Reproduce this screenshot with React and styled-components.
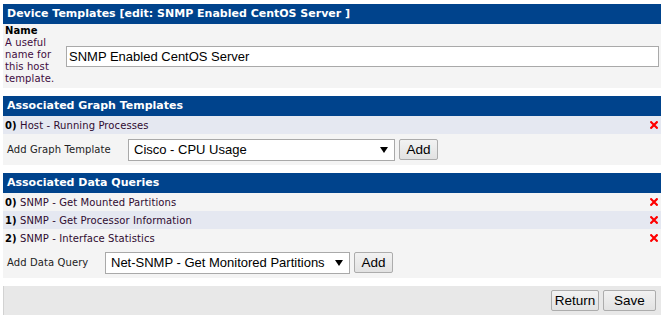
import React from "react";
import styled, { createGlobalStyle } from "styled-components";

const GlobalStyle = createGlobalStyle`
  body {
    margin: 0;
    background: #ffffff;
    font-family: "DejaVu Sans", Verdana, sans-serif;
  }
`;

const Page = styled.div`
  width: 658px;
  padding: 4px 3px 0 3px;
  display: flex;
  flex-direction: column;
  gap: 8px;
`;

const Panel = styled.section`
  display: flex;
  flex-direction: column;
`;

const TitleBar = styled.div`
  height: 20px;
  line-height: 20px;
  padding-left: 4px;
  background: #00438c;
  color: #ffffff;
  font-size: 11px;
  font-weight: bold;
  white-space: nowrap;
`;

const NameRow = styled.div`
  display: flex;
  align-items: center;
  height: 64px;
  background: #f4f4f4;
`;

const NameLabel = styled.div`
  width: 57px;
  padding: 1px 0 0 2px;
  align-self: flex-start;
  font-size: 10px;
  line-height: 12px;
  letter-spacing: 0.1px;
  color: #3e0c40;

  b {
    display: block;
    color: #000;
  }
`;

const TextInput = styled.input`
  box-sizing: border-box;
  width: 593px;
  height: 21px;
  margin-left: 4px;
  padding: 0 2px;
  border: 1px solid #a9a9a9;
  background: #ffffff;
  font-family: "Liberation Sans", Arial, sans-serif;
  font-size: 13px;
  color: #000;
  outline: none;
`;

const ItemRow = styled.div`
  display: flex;
  align-items: center;
  justify-content: space-between;
  height: 18px;
  padding: 0 3px 0 2px;
  background: ${(p) => (p.$alt ? "#e5e8f1" : "#f4f4f4")};
  font-size: 10px;
  letter-spacing: 0.1px;
  color: #2f0b30;

  b {
    color: #000;
  }
`;

const AddRow = styled.div`
  display: flex;
  align-items: center;
  height: 31px;
  background: #f4f4f4;
`;

const AddLabel = styled.div`
  width: ${(p) => p.$w}px;
  padding-left: 4px;
  font-size: 10px;
  letter-spacing: 0.1px;
  color: #222;
`;

const SelectBox = styled.div`
  position: relative;
  width: ${(p) => p.$w}px;
  height: 22px;
`;

const Select = styled.select`
  appearance: none;
  box-sizing: border-box;
  width: 100%;
  height: 100%;
  padding: 0 18px 0 5px;
  border: 1px solid #a9a9a9;
  border-radius: 0;
  background: #ffffff;
  font-family: "Liberation Sans", Arial, sans-serif;
  font-size: 13px;
  color: #000;
  outline: none;
`;

const Arrow = styled.svg`
  position: absolute;
  right: 7px;
  top: 8px;
  pointer-events: none;
`;

const Button = styled.button`
  box-sizing: border-box;
  width: ${(p) => p.$w}px;
  height: 21px;
  padding: 0;
  border: 1px solid #acacac;
  border-radius: 2px;
  background: linear-gradient(#f2f2f2, #e2e2e2);
  font-family: "Liberation Sans", Arial, sans-serif;
  font-size: 13.5px;
  color: #000;
  margin-left: ${(p) => p.$ml || 0}px;
`;

const Footer = styled.div`
  display: flex;
  align-items: center;
  justify-content: flex-end;
  gap: 4px;
  height: 29px;
  padding-right: 5px;
  background: #e8e8e8;
  border-left: 1px solid #d2d2d2;
`;

const RemoveIcon = () => (
  <svg width="8" height="8" viewBox="0 0 8 8">
    <path d="M1.2 1.2L6.8 6.8M6.8 1.2L1.2 6.8" stroke="#ff0000" strokeWidth="2.2" strokeLinecap="square" />
  </svg>
);

const Dropdown = ({ width, value }) => (
  <SelectBox $w={width}>
    <Select defaultValue={value}>
      <option>{value}</option>
    </Select>
    <Arrow width="8" height="6" viewBox="0 0 8 6">
      <path d="M0 0H8L4 6Z" fill="#000" />
    </Arrow>
  </SelectBox>
);

const queries = [
  "SNMP - Get Mounted Partitions",
  "SNMP - Get Processor Information",
  "SNMP - Interface Statistics",
];

export default function App() {
  return (
    <>
      <GlobalStyle />
      <Page>
        <Panel>
          <TitleBar>Device Templates [edit: SNMP Enabled CentOS Server ]</TitleBar>
          <NameRow>
            <NameLabel>
              <b>Name</b>
              A useful name for this host template.
            </NameLabel>
            <TextInput defaultValue="SNMP Enabled CentOS Server" />
          </NameRow>
        </Panel>

        <Panel>
          <TitleBar>Associated Graph Templates</TitleBar>
          <ItemRow $alt>
            <span>
              <b>0)</b> Host - Running Processes
            </span>
            <RemoveIcon />
          </ItemRow>
          <AddRow>
            <AddLabel $w={121}>Add Graph Template</AddLabel>
            <Dropdown width={267} value="Cisco - CPU Usage" />
            <Button $w={39} $ml={4}>Add</Button>
          </AddRow>
        </Panel>

        <Panel>
          <TitleBar>Associated Data Queries</TitleBar>
          {queries.map((q, i) => (
            <ItemRow key={q} $alt={i % 2 === 1}>
              <span>
                <b>{i})</b> {q}
              </span>
              <RemoveIcon />
            </ItemRow>
          ))}
          <AddRow>
            <AddLabel $w={98}>Add Data Query</AddLabel>
            <Dropdown width={245} value="Net-SNMP - Get Monitored Partitions" />
            <Button $w={39} $ml={4}>Add</Button>
          </AddRow>
        </Panel>

        <Footer>
          <Button $w={48}>Return</Button>
          <Button $w={53}>Save</Button>
        </Footer>
      </Page>
    </>
  );
}
